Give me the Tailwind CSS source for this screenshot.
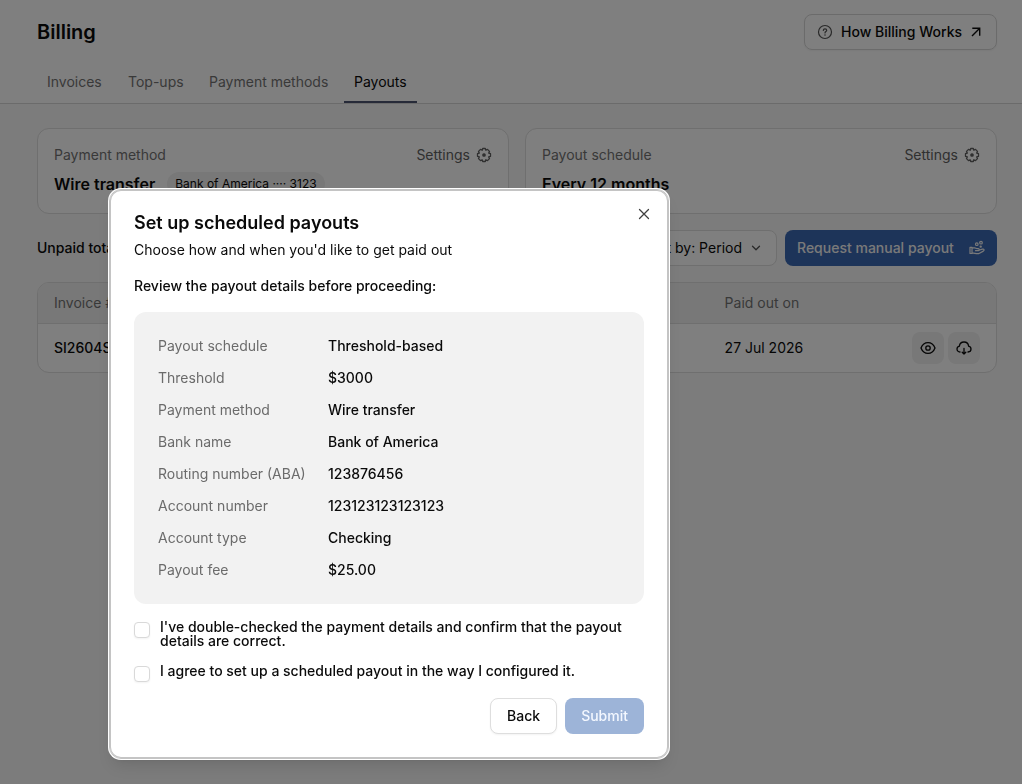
<!DOCTYPE html>
<html lang="en">
<head>
<meta charset="utf-8">
<meta name="viewport" content="width=device-width, initial-scale=1">
<title>Billing</title>
<script src="https://cdn.jsdelivr.net/npm/@tailwindcss/browser@4"></script>
</head>
<body class="min-h-screen overflow-x-hidden bg-[#f8f8f8] font-['Inter',sans-serif] text-sm text-[#0a0a0a]">
<header class="border-b border-[#d6d6d6] bg-white pt-3.5 pr-[25px] pl-[37px]">
  <div class="flex items-center justify-between">
    <h1 class="text-xl font-semibold">Billing</h1>
    <a href="#" class="flex h-9 items-center rounded-lg border border-[#d6d6d6] px-3 font-medium shadow-xs">
      <svg class="mr-2 size-4 text-[#525252]" viewBox="0 0 16 16" fill="none" stroke="currentColor" stroke-width="1.2" stroke-linecap="round" stroke-linejoin="round"><circle cx="8" cy="8" r="6.5"/><path d="M6.3 6.4c.1-1 .8-1.5 1.7-1.5s1.700.600 1.700 1.500c0 1.200-1.700 1.200-1.700 2.500"/><path d="M8 10.900v.200" stroke-width="1.500"/></svg>
      How Billing Works
      <svg class="ml-1.5 size-4" viewBox="0 0 16 16" fill="none" stroke="currentColor" stroke-width="1.4" stroke-linecap="square"><path d="M5 4.300h6.700v6.700M11.500 4.500 4.500 11.500"/></svg>
    </a>
  </div>
  <nav class="mt-3 flex gap-2 whitespace-nowrap text-[#737373]">
    <a href="#" class="w-[73px] pt-2.5 pb-[9px] pl-2.5">Invoices</a>
    <a href="#" class="w-[73px] pt-2.5 pb-[9px] pl-2.5">Top-ups</a>
    <a href="#" class="w-[137px] pt-2.5 pb-[9px] pl-2.5">Payment methods</a>
    <a href="#" aria-current="page" class="w-[73px] border-b-2 border-[#4c5470] pt-2.5 pb-[9px] pl-2.5 text-[#0a0a0a]">Payouts</a>
  </nav>
</header>

<main class="flex flex-col gap-4 pt-6 pr-[25px] pl-[37px]">
  <div class="grid grid-cols-2 gap-4">
    <section class="flex h-[86px] flex-col gap-[7px] rounded-xl border border-[#dedede] bg-white p-4">
      <div class="flex items-center justify-between text-[#737373]">
        <h2>Payment method</h2>
        <button type="button" class="flex items-center gap-1.5 text-[#606060]">Settings
          <svg class="size-4" viewBox="0 0 16 16" fill="none" stroke="currentColor" stroke-width="1.3" stroke-linejoin="round"><path d="M6.700 1.500h2.600l.5 1.700 1.700-.8 2 2-.8 1.700 1.800.6v2.600l-1.800.6.8 1.700-2 2-1.700-.8-.5 1.700H6.700l-.5-1.700-1.700.8-2-2 .8-1.700-1.800-.6V6.700l1.800-.6-.8-1.700 2-2 1.700.8Z"/><circle cx="8" cy="8" r="1.200" fill="currentColor"/></svg>
        </button>
      </div>
      <div class="flex items-center gap-3">
        <p class="text-base font-semibold">Wire transfer</p>
        <span class="rounded-full bg-[#f0f0f0] px-2 py-1 text-xs">Bank of America ···· 3123</span>
      </div>
    </section>
    <section class="flex h-[86px] flex-col gap-[7px] rounded-xl border border-[#dedede] bg-white p-4">
      <div class="flex items-center justify-between text-[#737373]">
        <h2>Payout schedule</h2>
        <button type="button" class="flex items-center gap-1.5 text-[#606060]">Settings
          <svg class="size-4" viewBox="0 0 16 16" fill="none" stroke="currentColor" stroke-width="1.3" stroke-linejoin="round"><path d="M6.700 1.500h2.600l.5 1.700 1.700-.8 2 2-.8 1.700 1.800.6v2.600l-1.800.6.8 1.700-2 2-1.700-.8-.5 1.700H6.700l-.5-1.700-1.700.8-2-2 .8-1.700-1.800-.6V6.700l1.800-.6-.8-1.700 2-2 1.700.8Z"/><circle cx="8" cy="8" r="1.200" fill="currentColor"/></svg>
        </button>
      </div>
      <p class="text-base font-semibold">Every 12 months</p>
    </section>
  </div>

  <div class="flex items-center gap-2">
    <p class="mr-auto font-medium">Unpaid total</p>
    <button type="button" class="flex h-9 items-center gap-1.5 rounded-lg border border-[#dedede] bg-white px-3">Sort by: Period
      <svg class="size-4 text-[#525252]" viewBox="0 0 16 16" fill="none" stroke="currentColor" stroke-width="1.3" stroke-linecap="round" stroke-linejoin="round"><path d="m4.500 6.300 3.500 3.500 3.500-3.500"/></svg>
    </button>
    <button type="button" class="flex h-9 w-[212px] items-center justify-between rounded-lg bg-[#3b68b2] px-3 font-medium text-[#f4f4f4]">Request manual payout
      <svg class="size-4" viewBox="0 0 16 16" fill="none" stroke="currentColor" stroke-width="1.2" stroke-linecap="round" stroke-linejoin="round"><path d="M1 7.300h2v6.200H1zM3 7.800h2.600c1 0 1.600.9 2.400.9h1.300c1.300 0 1.300 2 0 2H6.500M10.600 10l2.800-.8c1.700-.5 2.300 1 .9 1.900l-3.800 2.100c-1 .6-2 .6-3 .4L3 12.900"/><circle cx="7.800" cy="4.200" r="1.300"/><circle cx="12" cy="2.700" r="1.300"/><circle cx="11.700" cy="6.600" r=".6"/></svg>
    </button>
  </div>

  <div class="overflow-hidden rounded-xl border border-[#dedede] bg-white">
    <table class="w-full table-fixed text-left">
      <thead>
        <tr class="h-10 border-b border-[#dedede] bg-[#f0f0f0] text-[#737373]">
          <th scope="col" class="w-[70%] px-4 font-normal">Invoice #</th>
          <th scope="col" class="px-4 font-normal">Paid out on</th>
          <th scope="col" class="w-[100px]" aria-label="Actions"></th>
        </tr>
      </thead>
      <tbody>
        <tr class="h-[49px]">
          <td class="px-4 font-medium">SI2604S</td>
          <td class="px-4">27 Jul 2026</td>
          <td class="px-4">
            <div class="flex justify-end gap-1">
              <button type="button" aria-label="View" class="flex size-8 shrink-0 items-center justify-center rounded-lg bg-[#f0f0f0]"><svg class="size-4" viewBox="0 0 16 16" fill="none" stroke="currentColor" stroke-width="1.3"><path d="M1 8c1.400-3.600 4-5.400 7-5.400S13.600 4.400 15 8c-1.400 3.600-4 5.400-7 5.400S2.400 11.600 1 8Z"/><circle cx="8" cy="8" r="2.200"/></svg></button>
              <button type="button" aria-label="Download" class="flex size-8 shrink-0 items-center justify-center rounded-lg bg-[#f0f0f0]"><svg class="size-4" viewBox="0 0 16 16" fill="none" stroke="currentColor" stroke-width="1.3" stroke-linecap="round" stroke-linejoin="round"><path d="M4 12C2.200 12 1 10.700 1 9.100c0-1.500 1-2.600 2.400-2.900C3.600 3.700 5.500 2 8 2s4.400 1.700 4.600 4.200C14 6.500 15 7.600 15 9.100c0 1.600-1.200 2.900-3 2.900M8 8.300V14M6.200 12.300 8 14.100l1.800-1.800"/></svg></button>
            </div>
          </td>
        </tr>
      </tbody>
    </table>
  </div>
</main>

<div class="fixed inset-0 bg-black/50"></div>

<div role="dialog" aria-modal="true" aria-labelledby="title" class="absolute top-[189px] left-[109px] w-[560px] rounded-xl border border-[#c4c4c4] bg-white p-6 shadow-lg inset-ring inset-ring-[#c4c4c4] ring ring-white">
  <button type="button" aria-label="Close" class="absolute top-4 right-4 text-[#404040]">
    <svg class="size-4" viewBox="0 0 16 16" fill="none" stroke="currentColor" stroke-width="1.3" stroke-linecap="round"><path d="m3.500 3.500 9 9M12.500 3.500l-9 9"/></svg>
  </button>
  <h2 id="title" class="text-lg leading-[18px] font-semibold">Set up scheduled payouts</h2>
  <p class="mt-2 leading-5">Choose how and when you'd like to get paid out</p>
  <p class="mt-4 leading-5 font-medium">Review the payout details before proceeding:</p>
  <dl class="mt-4 grid grid-cols-[170px_1fr] gap-y-3 rounded-xl bg-[#f2f2f2] p-6 leading-5 [&>dd]:font-medium [&>dt]:text-[#6b6b6b]">
    <dt>Payout schedule</dt><dd>Threshold-based</dd>
    <dt>Threshold</dt><dd>$3000</dd>
    <dt>Payment method</dt><dd>Wire transfer</dd>
    <dt>Bank name</dt><dd>Bank of America</dd>
    <dt>Routing number (ABA)</dt><dd>123876456</dd>
    <dt>Account number</dt><dd>123123123123123</dd>
    <dt>Account type</dt><dd>Checking</dd>
    <dt>Payout fee</dt><dd>$25.00</dd>
  </dl>
  <div class="mt-4 flex flex-col gap-4 leading-[14px] font-medium">
    <div class="flex items-start gap-2.5">
      <input id="checked" type="checkbox" class="mt-0.5 size-4 shrink-0 appearance-none rounded-sm border border-[#d9d9d9] bg-white shadow-xs checked:bg-[#3b68b2]">
      <label for="checked">I've double-checked the payment details and confirm that the payout details are correct.</label>
    </div>
    <div class="flex items-start gap-2.5">
      <input id="agree" type="checkbox" class="mt-0.5 size-4 shrink-0 appearance-none rounded-sm border border-[#d9d9d9] bg-white shadow-xs checked:bg-[#3b68b2]">
      <label for="agree">I agree to set up a scheduled payout in the way I configured it.</label>
    </div>
  </div>
  <div class="mt-4 flex justify-end gap-2 font-medium">
    <button type="button" class="h-9 rounded-lg border border-[#dedede] bg-white px-4 shadow-xs">Back</button>
    <button type="submit" disabled class="h-9 rounded-lg bg-[#9db4d8] px-4 text-[#f4f8ff]">Submit</button>
  </div>
</div>
</body>
</html>
